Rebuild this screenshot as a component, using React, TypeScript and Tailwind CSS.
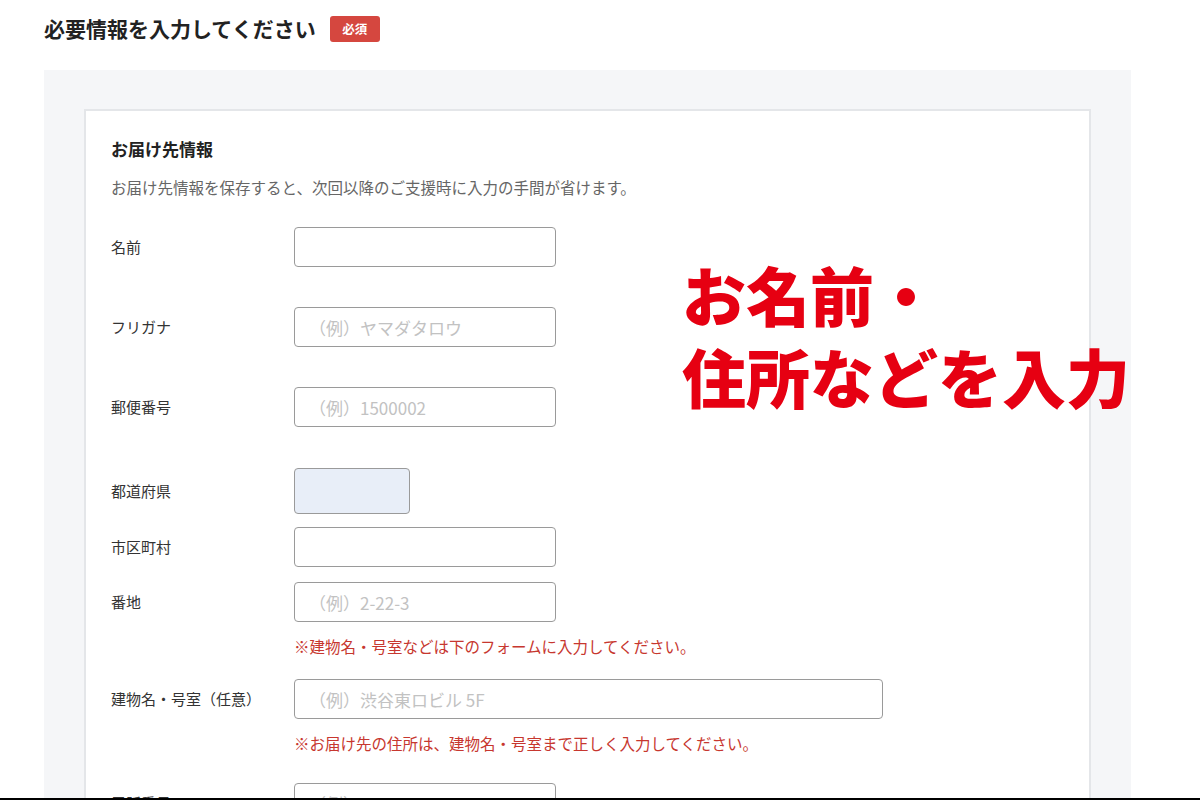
import React from "react";

const font = { fontFamily: '"Noto Sans CJK JP", "Noto Sans", sans-serif' };

function Row({
  label,
  placeholder,
  wide,
  pref,
  className = "",
}: {
  label: string;
  placeholder?: string;
  wide?: boolean;
  pref?: boolean;
  className?: string;
}) {
  return (
    <div className={"flex items-center " + className}>
      <div className="w-[183px] shrink-0 text-[15px] text-[#333]">{label}</div>
      {pref ? (
        <div className="w-[116px] h-[46px] rounded-[4px] border border-[#9a9a9a] bg-[#e8eef8]" />
      ) : (
        <input
          readOnly
          placeholder={placeholder}
          className={
            (wide ? "w-[589px]" : "w-[262px]") +
            " h-[40px] rounded-[4px] border-[1.5px] border-[#9a9a9a] bg-white pl-[14px] text-[17px] outline-none placeholder:text-[#c2c2c2]"
          }
          style={font}
        />
      )}
    </div>
  );
}

export default function App() {
  return (
    <div className="relative h-[800px] w-[1200px] overflow-hidden bg-white flex flex-col" style={font}>
      <div className="flex-1 overflow-hidden">
        <div className="flex pl-[44px] pt-[14px] h-[70px] items-start">
          <h1 className="text-[21px] font-bold text-[#222] leading-[28px]">必要情報を入力してください</h1>
          <span className="ml-[14px] mt-[2px] inline-flex h-[26px] w-[50px] items-center justify-center rounded-[3px] bg-[#d5473f] text-[12.5px] font-bold text-white">
            必須
          </span>
        </div>
        <div className="ml-[44px] w-[1087px] bg-[#f5f6f8] px-[40px] pt-[39px]">
          <div className="border-[2px] border-b-0 border-[#e4e6e9] bg-white pl-[25px] pt-[26px] pb-[40px]">
            <h2 className="text-[17px] font-bold text-[#222] leading-[24px]">お届け先情報</h2>
            <p className="mt-[15px] text-[15.5px] leading-[22px] text-[#666]">
              お届け先情報を保存すると、次回以降のご支援時に入力の手間が省けます。
            </p>
            <Row className="mt-[29px]" label="名前" />
            <Row className="mt-[40px]" label="フリガナ" placeholder="（例）ヤマダタロウ" />
            <Row className="mt-[40px]" label="郵便番号" placeholder="（例）1500002" />
            <Row className="mt-[41px]" label="都道府県" pref />
            <Row className="mt-[13px]" label="市区町村" />
            <Row className="mt-[15px]" label="番地" placeholder="（例）2-22-3" />
            <p className="mt-[13px] ml-[183px] text-[15.5px] leading-[22px] text-[#c7372f]">
              ※建物名・号室などは下のフォームに入力してください。
            </p>
            <Row className="mt-[22px]" label="建物名・号室（任意）" placeholder="（例）渋谷東ロビル 5F" wide />
            <p className="mt-[13px] ml-[183px] text-[15.5px] leading-[22px] text-[#c7372f]">
              ※お届け先の住所は、建物名・号室まで正しく入力してください。
            </p>
            <Row className="mt-[29px]" label="電話番号" placeholder="（例）09012345678" />
          </div>
        </div>
      </div>
      <div className="h-[2px] bg-black shrink-0" />
      <div className="absolute left-[682px] top-[252px] text-[64px] font-black leading-[82px] text-[#e60012]">
        <div>お名前・</div>
        <div>住所などを入力</div>
      </div>
    </div>
  );
}
